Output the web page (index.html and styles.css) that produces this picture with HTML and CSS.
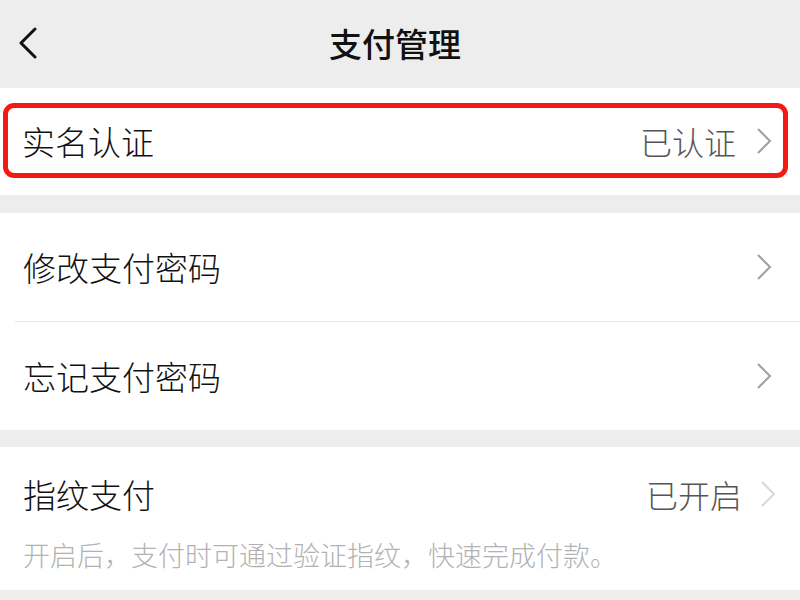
FILE: index.html
```html
<!DOCTYPE html>
<html lang="zh-CN">
<head>
  <meta charset="UTF-8">
  <title>支付管理</title>
  <link rel="stylesheet" href="styles.css">
</head>
<body>

  <header class="navbar">
    <a class="back" href="#">
      <svg width="20" height="32" viewBox="0 0 20 32"><polyline points="17,2 3,16 17,30" fill="none" stroke="#111" stroke-width="3" stroke-linecap="round" stroke-linejoin="round"/></svg>
    </a>
    <h1 class="title">支付管理</h1>
    <span></span>
  </header>

  <section class="group group-first">
    <div class="row row-marked">
      <span class="label">实名认证</span>
      <span class="value">已认证</span>
      <svg class="arrow" width="16" height="28" viewBox="0 0 16 28"><polyline points="2,2 14,14 2,26" fill="none" stroke="#a0a0a0" stroke-width="2"/></svg>
    </div>
  </section>

  <section class="group">
    <div class="row">
      <span class="label">修改支付密码</span>
      <svg class="arrow" width="16" height="28" viewBox="0 0 16 28"><polyline points="2,2 14,14 2,26" fill="none" stroke="#a0a0a0" stroke-width="2"/></svg>
    </div>
    <div class="row row-line">
      <span class="label">忘记支付密码</span>
      <svg class="arrow" width="16" height="28" viewBox="0 0 16 28"><polyline points="2,2 14,14 2,26" fill="none" stroke="#a0a0a0" stroke-width="2"/></svg>
    </div>
  </section>

  <section class="group group-last">
    <div class="row row-short">
      <span class="label">指纹支付</span>
      <span class="value">已开启</span>
      <svg class="arrow" width="16" height="28" viewBox="0 0 16 28"><polyline points="2,2 14,14 2,26" fill="none" stroke="#d8d8d8" stroke-width="2"/></svg>
    </div>
    <p class="tip">开启后，支付时可通过验证指纹，快速完成付款。</p>
  </section>

</body>
</html>
```

FILE: styles.css
```css
body { margin: 0; background: #ededed; font-family: "Noto Sans CJK SC", "Noto Sans", sans-serif; color: #111; }

.navbar { height: 86px; display: grid; grid-template-columns: 1fr auto 1fr; align-items: center; padding: 0 10px 2px 0; }
.back { display: flex; padding-left: 18px; }
.title { margin: 0; font-size: 33px; font-weight: 500; }

.group { background: #fff; margin-bottom: 17px; }
.group-first { padding: 15px 12px 17px 3px; margin-bottom: 18px; }
.group-last { margin-bottom: 0; padding-bottom: 21px; }

.row { height: 108px; display: flex; align-items: center; padding: 0 28px 0 23px; }
.row-line { margin-left: 15px; padding-left: 8px; border-top: 1px solid #e6e6e6; }
.row-marked { height: 65px; border: 5px solid #f21a12; border-radius: 11px; padding: 0 11px 0 14px; }
.row-short { height: 94px; padding-right: 24px; }
.row-short .value { margin-right: 18px; }

.label { flex: 1; font-size: 33px; font-weight: 300; }
.value { font-size: 32px; font-weight: 300; color: #555; margin-right: 20px; }
.arrow { display: block; }

.tip { margin: 0; padding-left: 23px; font-size: 27px; line-height: 28px; font-weight: 300; color: #b2b2b2; }
```
